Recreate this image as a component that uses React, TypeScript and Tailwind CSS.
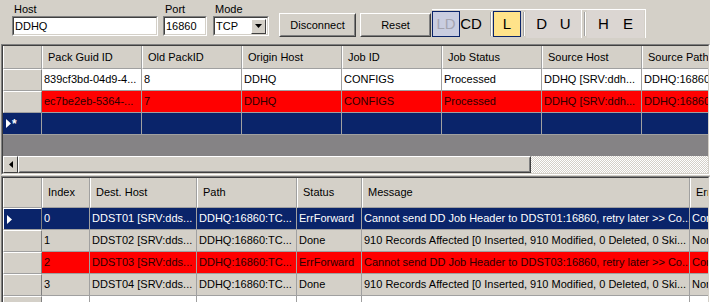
import React from "react";

const font = "font-['Liberation_Sans',Arial,sans-serif]";

type Col = { w: string; title: string };

const topCols: Col[] = [
  { w: "w-[100px]", title: "Pack Guid ID" },
  { w: "w-[100px]", title: "Old PackID" },
  { w: "w-[100px]", title: "Origin Host" },
  { w: "w-[100px]", title: "Job ID" },
  { w: "w-[100px]", title: "Job Status" },
  { w: "w-[100px]", title: "Source Host" },
  { w: "w-[100px]", title: "Source Path" },
];

const topRows = [
  { bg: "bg-white text-black", cells: ["839cf3bd-04d9-4...", "8", "DDHQ", "CONFIGS", "Processed", "DDHQ [SRV:ddh...", "DDHQ:16860:TCP..."] },
  { bg: "bg-[#ff0000] text-[#2a0000]", cells: ["ec7be2eb-5364-...", "7", "DDHQ", "CONFIGS", "Processed", "DDHQ [SRV:ddh...", "DDHQ:16860:TCP..."] },
];

const botCols: Col[] = [
  { w: "w-[48px]", title: "Index" },
  { w: "w-[107px]", title: "Dest. Host" },
  { w: "w-[100px]", title: "Path" },
  { w: "w-[65px]", title: "Status" },
  { w: "w-[328px]", title: "Message" },
  { w: "w-[100px]", title: "Error Message" },
];

const botRows = [
  { bg: "bg-[#0a246a] text-white", head: "bg-[#0a246a]", arrow: true, cells: ["0", "DDST01 [SRV:dds...", "DDHQ:16860:TC...", "ErrForward", "Cannot send DD Job Header to DDST01:16860, retry later >> Co...", "Connection refused"] },
  { bg: "bg-[#d4d0c8] text-black", head: "bg-[#d4d0c8]", arrow: false, cells: ["1", "DDST02 [SRV:dds...", "DDHQ:16860:TC...", "Done", "910 Records Affected [0 Inserted, 910 Modified, 0 Deleted, 0 Ski...", "None"] },
  { bg: "bg-[#ff0000] text-[#2a0000]", head: "bg-[#d4d0c8]", arrow: false, cells: ["2", "DDST03 [SRV:dds...", "DDHQ:16860:TC...", "ErrForward", "Cannot send DD Job Header to DDST03:16860, retry later >> Co...", "Connection refused"] },
  { bg: "bg-[#d4d0c8] text-black", head: "bg-[#d4d0c8]", arrow: false, cells: ["3", "DDST04 [SRV:dds...", "DDHQ:16860:TC...", "Done", "910 Records Affected [0 Inserted, 910 Modified, 0 Deleted, 0 Ski...", "None"] },
  { bg: "bg-white text-black", head: "bg-[#d4d0c8]", arrow: false, cells: ["", "", "", "", "", ""] },
];

function Arrow() {
  return (
    <svg width="5" height="9" viewBox="0 0 5 9">
      <path d="M0 0 L5 4.5 L0 9 Z" fill="#fff" />
    </svg>
  );
}

function HeadCell({ w, title, h }: { w: string; title: string; h: string }) {
  return (
    <div className={`${w} ${h} shrink-0 flex items-center pl-[5px] border-l border-white border-r border-r-[#a0a0a0] border-b border-b-[#a0a0a0] bg-[#d4d0c8] text-black whitespace-nowrap overflow-hidden`}>
      {title}
    </div>
  );
}

function Cell({ w, text }: { w: string; text: string }) {
  return (
    <div className={`${w} h-[22px] shrink-0 flex items-center pl-[2px] border-r border-b border-[#a0a0a0] whitespace-nowrap overflow-hidden`}>
      {text}
    </div>
  );
}

function RowHead({ cls, children }: { cls: string; children?: React.ReactNode }) {
  return (
    <div className={`w-[39px] h-[22px] shrink-0 flex items-center pl-[3px] gap-[1px] border-l border-t border-white border-r border-r-[#808080] border-b border-b-[#a0a0a0] ${cls}`}>
      {children}
    </div>
  );
}

function Sunken({ children, cls }: { children: React.ReactNode; cls: string }) {
  return (
    <div className={`border border-[#808080] border-b-white border-r-white ${cls}`}>
      <div className="h-full border border-[#404040] border-b-[#d4d0c8] border-r-[#d4d0c8] overflow-hidden flex flex-col">
        {children}
      </div>
    </div>
  );
}

function Button({ label, w }: { label: string; w: string }) {
  return (
    <div className={`${w} h-[24px] border border-white border-b-[#404040] border-r-[#404040]`}>
      <div className="h-full flex items-center justify-center border border-transparent border-b-[#808080] border-r-[#808080] text-black">
        {label}
      </div>
    </div>
  );
}

function Field({ label, w, children, cls }: { label: string; w: string; children: React.ReactNode; cls: string }) {
  return (
    <div className={`flex flex-col ${cls}`}>
      <div className="h-[13px] mt-[3px] pl-[2px] leading-[13px] text-black">{label}</div>
      <div className={`${w} h-[20px] bg-white border border-[#808080] border-b-white border-r-white`}>
        <div className="h-full border border-[#404040] border-b-[#d4d0c8] border-r-[#d4d0c8] flex items-center pl-[1px] text-black">
          {children}
        </div>
      </div>
    </div>
  );
}

export default function App() {
  return (
    <div className={`${font} text-[11px] w-[710px] h-[302px] bg-[#d4d0c8] overflow-hidden flex flex-col`}>
      {/* top bar */}
      <div className="h-[44px] shrink-0 flex items-start">
        <Field label="Host" w="w-[146px]" cls="ml-[12px]">DDHQ</Field>
        <Field label="Port" w="w-[44px]" cls="ml-[5px]">16860</Field>
        <Field label="Mode" w="w-[56px]" cls="ml-[6px]">
          <div className="flex-1 flex items-center justify-between pr-[1px]">
            <span>TCP</span>
            <div className="w-[15px] h-[15px] bg-[#d4d0c8] border border-white border-b-[#404040] border-r-[#404040] flex items-center justify-center">
              <svg width="7" height="4" viewBox="0 0 7 4"><path d="M0 0 H7 L3.5 4 Z" fill="#000" /></svg>
            </div>
          </div>
        </Field>
        <div className="ml-[10px] mt-[13px]"><Button label="Disconnect" w="w-[77px]" /></div>
        <div className="ml-[4px] mt-[13px]"><Button label="Reset" w="w-[71px]" /></div>
        <div className="ml-[1px] mt-[9px] h-[29px] flex items-stretch border-t border-r border-white text-[15px] pr-[1px]">
          <div className="w-[28px] mt-[1px] mb-[1px] flex items-center justify-center border border-[#0a246a] bg-[#c9cde0] text-[#a4a4b0]">LD</div>
          <div className="w-[22px] flex items-center justify-center text-black">CD</div>
          <div className="ml-[8px] my-[2px] w-[2px] border-l border-[#a0a0a0] border-r border-r-white" />
          <div className="ml-[1px] w-[28px] my-[1px] flex items-center justify-center border border-[#0a246a] bg-[#ffe38a] text-black">L</div>
          <div className="ml-[2px] my-[2px] w-[2px] border-l border-[#a0a0a0] border-r border-r-white" />
          <div className="ml-[1px] w-[56px] flex items-center justify-around bg-[#dbd6d2] border-r border-white text-black px-[4px]">
            <span>D</span><span>U</span>
          </div>
          <div className="ml-[2px] my-[2px] w-[2px] border-l border-[#a0a0a0] border-r border-r-white" />
          <div className="ml-[1px] w-[57px] flex items-center justify-around bg-[#dbd6d2] text-black px-[4px]">
            <span>H</span><span>E</span>
          </div>
        </div>
      </div>

      {/* upper grid */}
      <Sunken cls="ml-[1px] h-[131px] shrink-0">
        <div className="flex h-[23px] shrink-0">
          <div className="w-[39px] h-[23px] shrink-0 border-l border-white border-r border-r-[#a0a0a0] border-b border-b-[#a0a0a0] bg-[#d4d0c8]" />
          {topCols.map((c) => (
            <HeadCell key={c.title} w={c.w} title={c.title} h="h-[23px]" />
          ))}
        </div>
        {topRows.map((r, i) => (
          <div key={i} className="flex h-[22px] shrink-0">
            <RowHead cls="bg-[#d4d0c8]" />
            <div className={`flex ${r.bg}`}>
              {topCols.map((c, j) => (
                <Cell key={j} w={c.w} text={r.cells[j]} />
              ))}
            </div>
          </div>
        ))}
        <div className="flex h-[22px] shrink-0 bg-[#0a246a] text-white">
          <div className="w-[39px] h-[22px] shrink-0 flex items-center pl-[3px] gap-[1px] border-r border-b border-[#a0a0a0]">
            <Arrow />
            <span className="text-[12px] leading-none font-bold">*</span>
          </div>
          {topCols.map((c, j) => (
            <Cell key={j} w={c.w} text="" />
          ))}
        </div>
        <div className="flex-1 bg-[#858385]" />
        {/* horizontal scrollbar */}
        <div className="h-[17px] shrink-0 flex">
          <div className="w-[15px] h-full bg-[#d4d0c8] border border-white border-b-[#404040] border-r-[#404040] flex items-center justify-center">
            <svg width="4" height="7" viewBox="0 0 4 7"><path d="M4 0 V7 L0 3.5 Z" fill="#000" /></svg>
          </div>
          <div className="w-[513px] h-full bg-[#d4d0c8] border border-white border-b-[#404040] border-r-[#404040]">
            <div className="h-full border border-transparent border-b-[#808080] border-r-[#808080]" />
          </div>
          <div className="flex-1 h-full bg-[repeating-conic-gradient(#ffffff_0_25%,#d4d0c8_0_50%)] bg-[length:2px_2px]" />
        </div>
      </Sunken>

      {/* lower grid */}
      <Sunken cls="ml-[1px] mt-[1px] flex-1">
        <div className="flex h-[30px] shrink-0">
          <div className="w-[39px] h-[30px] shrink-0 border-l border-white border-r border-r-[#a0a0a0] border-b border-b-[#a0a0a0] bg-[#d4d0c8]" />
          {botCols.map((c) => (
            <HeadCell key={c.title} w={c.w} title={c.title} h="h-[30px]" />
          ))}
        </div>
        {botRows.map((r, i) => (
          <div key={i} className="flex h-[22px] shrink-0">
            <RowHead cls={r.head}>{r.arrow && <Arrow />}</RowHead>
            <div className={`flex ${r.bg}`}>
              {botCols.map((c, j) => (
                <Cell key={j} w={c.w} text={r.cells[j]} />
              ))}
            </div>
          </div>
        ))}
      </Sunken>
    </div>
  );
}
